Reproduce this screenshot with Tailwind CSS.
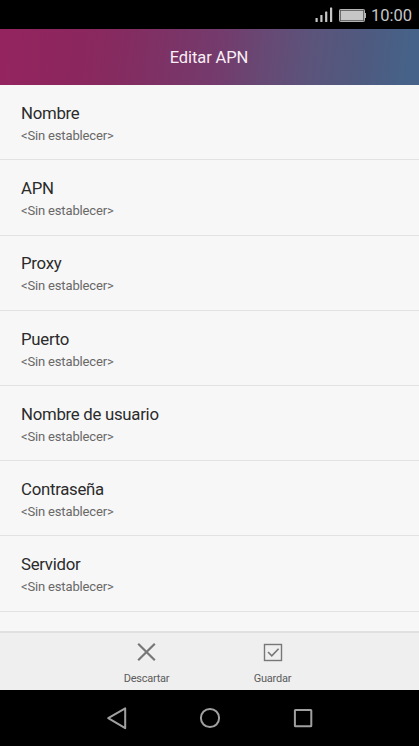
<!DOCTYPE html>
<html lang="es">
<head>
  <meta charset="UTF-8" />
  <meta name="viewport" content="width=device-width, initial-scale=1" />
  <title>Editar APN</title>
  <script src="https://cdn.jsdelivr.net/npm/@tailwindcss/browser@4"></script>
</head>
<body class="bg-black font-['Roboto',sans-serif]">
  <div class="w-[419px] h-[746px] flex flex-col overflow-hidden bg-black">

    <!-- Status bar -->
    <div class="h-[29px] shrink-0 flex items-center justify-end pr-[7px] pt-[2px] text-[#c6c6c6]">
      <svg class="w-[18px] h-[15px] mr-[6px] -mt-[2px]" viewBox="0 0 18 15" fill="currentColor">
        <rect x="0.5" y="11" width="2.2" height="4" rx="0.5" />
        <rect x="5.3" y="8" width="2.2" height="7" rx="0.5" />
        <rect x="10.1" y="4.5" width="2.2" height="10.5" rx="0.5" />
        <rect x="15" y="0.5" width="2.2" height="14.5" rx="0.5" />
      </svg>
      <svg class="w-[27px] h-[14px] mr-[5px] -mt-[2px]" viewBox="0 0 27 14">
        <rect x="0.5" y="1.5" width="25" height="12" rx="0.8" fill="#555555" stroke="#b4b4b4" />
        <rect x="1.8" y="2.8" width="22.4" height="9.4" fill="#c6c6c6" />
        <rect x="25.6" y="5" width="1.4" height="5" fill="#b4b4b4" />
      </svg>
      <span class="text-[16.5px] leading-5">10:00</span>
    </div>

    <header class="h-[56px] shrink-0 flex items-center justify-center pt-[3px] bg-[linear-gradient(97deg,#94245f_0%,#8c265e_18%,#842c61_30%,#7b3467_42%,#743b6c_52%,#684874_62%,#5b547b_74%,#50597f_85%,#466288_97%)]">
      <h1 class="text-[16.5px] tracking-[-0.1px] mr-px text-[#f8eef5]">Editar APN</h1>
    </header>

    <!-- APN fields -->
    <main class="h-[546px] shrink-0 overflow-hidden bg-[#f7f7f7] pt-[0.3px]">
      <ul id="apn-fields"></ul>
    </main>

    <footer class="h-[59px] shrink-0 flex justify-center gap-[46px] bg-[#efefef] border-t-2 border-[#e0e0e0] text-[#777777]">
      <button class="w-20 flex flex-col items-center pt-[9px]">
        <svg class="w-5 h-5" viewBox="0 0 20 20" fill="none" stroke="currentColor" stroke-width="2.2">
          <path d="M1.2 1.7 17.8 18.3M17.8 1.7 1.2 18.3" />
        </svg>
        <span class="mt-[9px] text-[11px] leading-4 tracking-[-0.25px] text-[#5c5c5c]">Descartar</span>
      </button>
      <button class="w-20 flex flex-col items-center pt-[9px]">
        <svg class="w-5 h-5" viewBox="0 0 20 20" fill="none" stroke="currentColor">
          <rect x="1.5" y="2.5" width="17" height="16" stroke-width="1.4" />
          <path d="M5 10 8.8 13.8 15.6 6.8" stroke-width="1.6" />
        </svg>
        <span class="mt-[9px] text-[11px] leading-4 tracking-[-0.2px] text-[#5c5c5c]">Guardar</span>
      </button>
    </footer>

    <!-- Navigation bar -->
    <nav class="h-[56px] shrink-0 flex items-center justify-center gap-[69px] text-[#a0a0a0]">
      <svg class="w-6 h-6" viewBox="0 0 24 24" fill="none" stroke="currentColor" stroke-width="2" stroke-linejoin="round">
        <path d="M20.2 2.4V22.2L3.2 12.2Z" />
      </svg>
      <svg class="w-6 h-6" viewBox="0 0 24 24" fill="none" stroke="currentColor" stroke-width="2">
        <circle cx="12" cy="12" r="9.1" />
      </svg>
      <svg class="w-6 h-6" viewBox="0 0 24 24" fill="none" stroke="currentColor" stroke-width="2">
        <rect x="3.9" y="3.9" width="16.4" height="16.4" rx="0.6" />
      </svg>
    </nav>
  </div>

  <script>
    const fields = ["Nombre", "APN", "Proxy", "Puerto", "Nombre de usuario", "Contraseña", "Servidor"];
    const list = document.getElementById('apn-fields');

    fields.forEach((field) => {
      const item = document.createElement('li');
      item.className = 'h-[75.2px] pl-[21px] pt-[16.8px] border-b border-[#e2e2e2]';
      item.innerHTML = `
        <p class="text-[16.8px] leading-[22px] tracking-[-0.28px] text-[#2b2b2b]">${field}</p>
        <p class="text-[13px] leading-4 mt-[4px] tracking-[-0.16px] text-[#686868]">&lt;Sin establecer&gt;</p>`;
      list.appendChild(item);
    });
  </script>
</body>
</html>
